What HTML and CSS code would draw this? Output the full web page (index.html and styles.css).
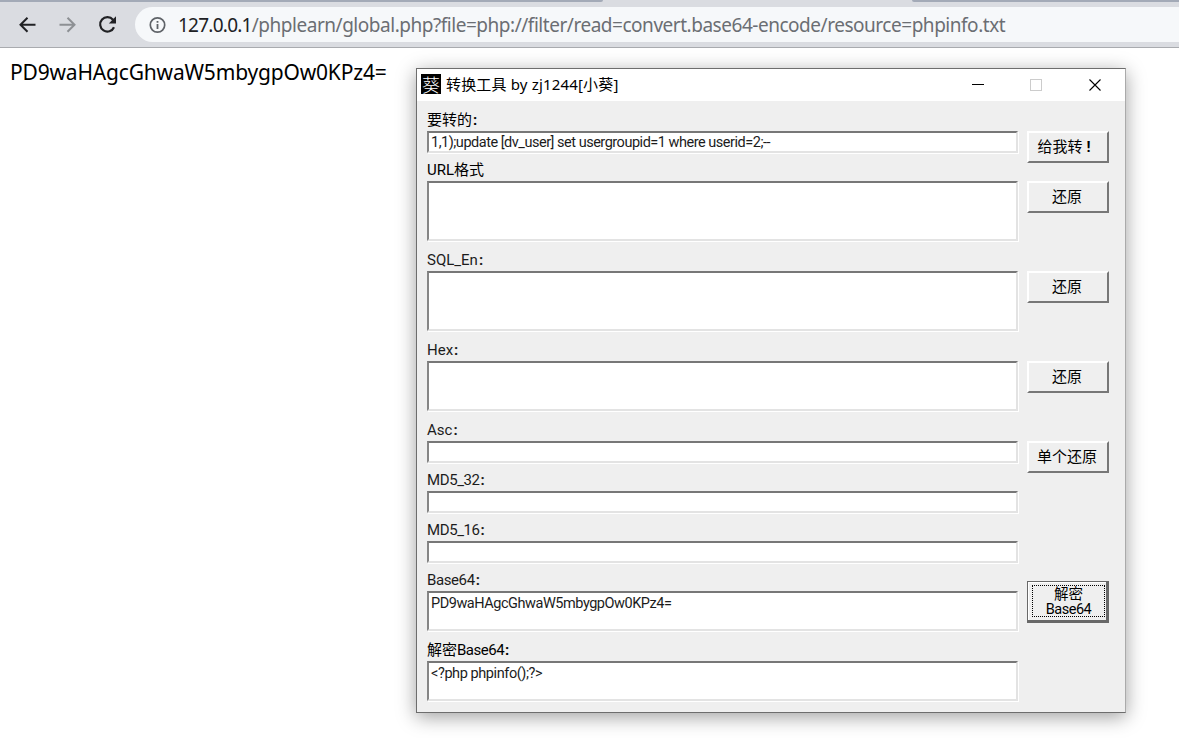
FILE: index.html
```html
<!DOCTYPE html>
<html lang="zh-CN">
<head>
<meta charset="utf-8">
<title>phpinfo.txt</title>
<link rel="stylesheet" href="styles.css">
</head>
<body>
<header class="browser">
  <div class="tabs"><span class="tab-strip tab-left"></span><span class="tab-strip tab-right"></span></div>
  <div class="toolbar">
    <svg class="nav" width="20" height="20" viewBox="0 0 20 20"><path d="M17.500 9.700H3M9.500 2.700L2.500 9.700l7 7" fill="none" stroke="#202124" stroke-width="2"/></svg>
    <svg class="nav" width="20" height="20" viewBox="0 0 20 20"><path d="M1.500 9.700H16M9.500 2.700l7 7-7 7" fill="none" stroke="#8d9094" stroke-width="2"/></svg>
    <svg class="nav" width="20" height="20" viewBox="0 0 20 20"><path d="M15 4.800A7.200 7.200 0 1 0 16 12.200" fill="none" stroke="#202124" stroke-width="2.200"/><path d="M18 1.300v7.200h-7.200z" fill="#202124"/></svg>
    <div class="address">
      <svg class="info" width="18" height="18" viewBox="0 0 18 18"><circle cx="9.500" cy="9" r="7.200" fill="none" stroke="#5f6368" stroke-width="1.700"/><path d="M9.500 8v5M9.500 5v1.800" stroke="#5f6368" stroke-width="1.800"/></svg>
      <span class="url"><b>127.0.0.1</b>/phplearn/global.php?file=php://filter/read=convert.base64-encode/resource=phpinfo.txt</span>
    </div>
  </div>
</header>
<main class="page"><span class="output">PD9waHAgcGhwaW5mbygpOw0KPz4=</span></main>

<section class="window">
  <div class="titlebar">
    <span class="app-icon">葵</span>
    <span class="title">转换工具 by zj1244[小葵]</span>
    <svg class="controls" width="130" height="14" viewBox="0 0 130 14" fill="none" shape-rendering="crispEdges"><path d="M0 6.500h12" stroke="#000"/><rect x="58.500" y="1.500" width="11" height="11" stroke="#ccc"/><path d="M117.500 1.500l11 11M128.500 1.500l-11 11" stroke="#000" stroke-width="1.100" shape-rendering="auto"/></svg>
  </div>
  <form class="form">
    <div class="row"><div class="entry"><label class="label cjk">要转的<i>:</i></label><div class="field h22"><span class="query">1,1);update [dv_user] set usergroupid=1 where userid=2;--</span></div></div><button type="button" class="button">给我转<i class="bang">!</i></button></div>
    <div class="row"><div class="entry"><label class="label cjk">URL格式</label><div class="field h61"></div></div><button type="button" class="button">还原</button></div>
    <div class="row"><div class="entry"><label class="label">SQL_En<i>:</i></label><div class="field h61"></div></div><button type="button" class="button">还原</button></div>
    <div class="row"><div class="entry"><label class="label">Hex<i>:</i></label><div class="field h51"></div></div><button type="button" class="button">还原</button></div>
    <div class="row"><div class="entry"><label class="label">Asc<i>:</i></label><div class="field h22"></div></div><button type="button" class="button">单个还原</button></div>
    <div class="row"><div class="entry"><label class="label tight">MD5_32<i>:</i></label><div class="field h22"></div></div></div>
    <div class="row"><div class="entry"><label class="label tight">MD5_16<i>:</i></label><div class="field h22"></div></div></div>
    <div class="row"><div class="entry"><label class="label tight">Base64<i>:</i></label><div class="field h41"><span class="encoded">PD9waHAgcGhwaW5mbygpOw0KPz4=</span></div></div><button type="button" class="button focused"><span class="focus-ring"><span>解密</span><span class="b64">Base64</span></span></button></div>
    <div class="row"><div class="entry"><label class="label cjk">解密<span class="b64">Base64</span><i>:</i></label><div class="field h41"><span class="decoded">&lt;?php phpinfo();?&gt;</span></div></div></div>
  </form>
</section>
</body>
</html>
```
FILE: styles.css
```css
* { box-sizing: border-box; }
body { margin: 0; height: 738px; overflow: hidden; background: #fff; font-family: "Noto Sans", "Noto Sans CJK SC", sans-serif; }
.browser { height: 48px; background: #dadce1; border-bottom: 1px solid #a9abaf; }
.tabs { height: 7px; display: flex; justify-content: space-between; }
.tab-strip { height: 2px; background: #a3aab7; }
.tab-left { width: 603px; border-bottom-right-radius: 4px; }
.tab-right { width: 267px; border-bottom-left-radius: 4px; }
.toolbar { display: flex; align-items: center; height: 35px; padding-left: 18px; }
.nav { margin-right: 20px; flex: none; }
.address { flex: 1; height: 35px; margin-left: -3px; border-radius: 18px 0 0 18px; background: #f6f8fa; display: flex; align-items: center; padding-left: 13px; }
.info { margin-right: 12px; flex: none; }
.url { font-size: 19px; line-height: 34px; white-space: nowrap; color: #6b6e73; letter-spacing: -0.47px; }
.url b { font-weight: 400; color: #202124; letter-spacing: -0.75px; }
.page { padding: 9px 10px; font-size: 21px; line-height: 30px; letter-spacing: -0.18px; color: #000; }
.window { position: absolute; left: 416px; top: 68px; width: 710px; height: 645px; border: 1px solid #6d6d6d; border-right-color: #aaa; background: #efefef; box-shadow: 0 4px 18px rgba(0,0,0,.38); }
.titlebar { height: 32px; background: #fff; display: flex; align-items: center; padding-left: 4px; }
.app-icon { width: 20px; height: 20px; margin-bottom: 2px; background: #000; color: #fff; font: 300 18px/20px "Noto Sans CJK SC", sans-serif; text-align: center; }
.title { margin-left: 5px; font-size: 15px; line-height: 30px; flex: 1; color: #000; white-space: nowrap; letter-spacing: 0.17px; margin-bottom: 2px; }
.controls { margin-right: 23px; }
.form { padding: 8px 10px 0; font-family: Roboto, "Noto Sans CJK SC", sans-serif; font-size: 15px; color: #1c1c1c; }
.row { display: flex; align-items: flex-start; gap: 9px; }
.entry { width: 591px; }
.label { display: block; height: 22px; line-height: 22px; white-space: nowrap; }
.cjk { color: #000; }
.tight { letter-spacing: -0.4px; }
.b64 { letter-spacing: -0.5px; }
.label i { font-style: normal; font-weight: 700; margin-left: 1px; }
.field { background: #fff; border: 2px solid; border-color: #777 #e3e3e3 #e3e3e3 #858585; box-shadow: 1px 1px #fff; padding-left: 2px; font-size: 14.500px; line-height: 18px; white-space: nowrap; }
.h22 { height: 22px; margin-bottom: 6px; }
.h61 { height: 60px; margin-bottom: 8px; }
.h51 { height: 50px; margin-bottom: 8px; }
.h41 { height: 40px; margin-bottom: 8px; }
.field span { display: block; }
.query { letter-spacing: -0.48px; line-height: 20px; }
.encoded { letter-spacing: -0.46px; line-height: 21px; }
.decoded { letter-spacing: -0.42px; line-height: 21px; }
.button { width: 82px; height: 32px; margin: 22px 0 -10px; padding: 0 2px 0 0; border: 2px solid; border-color: #fff #777 #777 #fff; background: #efefef; font: 15px/20px Roboto, "Noto Sans CJK SC", sans-serif; color: #000; white-space: nowrap; }
.bang { font-style: normal; font-weight: 700; margin: 0 6px 0 4px; }
.focused { height: 42px; margin-top: 12px; padding: 0; border-color: #686868; border-width: 1px 3px 3px 1px; box-shadow: inset 1px 1px #fff; }
.focus-ring { display: block; margin: 0 1px 0 4px; height: 32px; border: 1px dotted #000; font-size: 14.500px; }
.focus-ring span { display: block; height: 15px; line-height: 17px; }
```
